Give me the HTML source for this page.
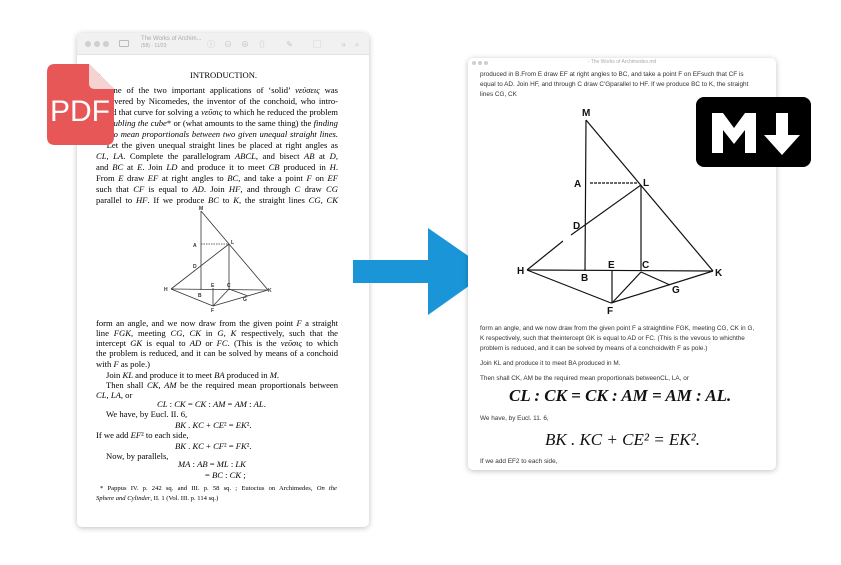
<!DOCTYPE html>
<html><head><meta charset="utf-8"><style>
*{margin:0;padding:0;box-sizing:border-box}
body{width:841px;height:565px;background:#fff;position:relative;overflow:hidden;font-family:"Liberation Serif",serif}
.win{position:absolute;background:#fff;border-radius:5px;box-shadow:0 1px 6px rgba(0,0,0,.25);overflow:hidden}
.l{position:absolute;white-space:nowrap;color:#000}
.lp .l{font-size:8.6px;left:96px;width:242px;text-align:justify;text-align-last:justify;line-height:11px}
.rp .l{font-family:"Liberation Sans",sans-serif;font-size:6.4px;color:#333;left:480px;line-height:10px}
.dot{position:absolute;width:6px;height:6px;border-radius:50%;background:#cfcfcf}
i{font-style:italic}
</style></head><body>
<div class="win" style="left:77px;top:33px;width:292px;height:494px">
 <div style="position:absolute;left:0;top:0;width:100%;height:22px;background:#f1f1f1;border-bottom:1px solid #e2e2e2"></div>
 <div class="dot" style="left:8px;top:8px"></div><div class="dot" style="left:17px;top:8px"></div><div class="dot" style="left:26px;top:8px"></div>
 <div style="position:absolute;left:42px;top:7px;width:10px;height:7px;border:1px solid #bbb;border-radius:1px"></div>
 <div style="position:absolute;left:64px;top:3px;font:6px 'Liberation Sans',sans-serif;color:#aaa;line-height:7px">The Works of Archim...<br><span style="font-size:5px">(58) · 11/23</span></div>
 <div style="position:absolute;left:130px;top:6px;font:8px 'Liberation Sans',sans-serif;color:#c4c4c4;letter-spacing:9px">ⓘ⊖⊕⇧ ✎ ▢ »⌕</div>
</div>
<div class="lp">
<div class="l" style="top:70px;left:96px;width:10px;text-align:left">x</div>
<div class="l" style="top:70px;left:190px;width:90px;text-align:left;text-align-last:auto">INTRODUCTION.</div>
<div class="l" style="top:85px"><b>4.</b> One of the two important applications of ‘solid’ <i>νεύσεις</i> was</div>
<div class="l" style="top:96px">discovered by Nicomedes, the inventor of the conchoid, who intro-</div>
<div class="l" style="top:107px">duced that curve for solving a <i>νεῦσις</i> to which he reduced the problem</div>
<div class="l" style="top:118px"><i>of doubling the cube</i>* or (what amounts to the same thing) the <i>finding</i></div>
<div class="l" style="top:129px"><i>of two mean proportionals between two given unequal straight lines.</i></div>
<div class="l" style="top:140px">&nbsp;&nbsp;&nbsp;Let the given unequal straight lines be placed at right angles as</div>
<div class="l" style="top:151px"><i>CL</i>, <i>LA</i>. Complete the parallelogram <i>ABCL</i>, and bisect <i>AB</i> at <i>D</i>,</div>
<div class="l" style="top:162px">and <i>BC</i> at <i>E</i>. Join <i>LD</i> and produce it to meet <i>CB</i> produced in <i>H</i>.</div>
<div class="l" style="top:173px">From <i>E</i> draw <i>EF</i> at right angles to <i>BC</i>, and take a point <i>F</i> on <i>EF</i></div>
<div class="l" style="top:184px">such that <i>CF</i> is equal to <i>AD</i>. Join <i>HF</i>, and through <i>C</i> draw <i>CG</i></div>
<div class="l" style="top:195px">parallel to <i>HF</i>. If we produce <i>BC</i> to <i>K</i>, the straight lines <i>CG</i>, <i>CK</i></div>
<div class="l" style="top:318px">form an angle, and we now draw from the given point <i>F</i> a straight</div>
<div class="l" style="top:328px">line <i>FGK</i>, meeting <i>CG</i>, <i>CK</i> in <i>G</i>, <i>K</i> respectively, such that the</div>
<div class="l" style="top:338px">intercept <i>GK</i> is equal to <i>AD</i> or <i>FC</i>. (This is the <i>νεῦσις</i> to which</div>
<div class="l" style="top:348px">the problem is reduced, and it can be solved by means of a conchoid</div>
<div class="l" style="top:359px;width:auto;text-align-last:auto">with <i>F</i> as pole.)</div>
<div class="l" style="top:370px;left:106px;width:auto;text-align-last:auto">Join <i>KL</i> and produce it to meet <i>BA</i> produced in <i>M</i>.</div>
<div class="l" style="top:380px;left:106px;width:232px">Then shall <i>CK</i>, <i>AM</i> be the required mean proportionals between</div>
<div class="l" style="top:390px;width:auto;text-align-last:auto"><i>CL</i>, <i>LA</i>, or</div>
<div class="l" style="top:399px;left:157px;width:auto;text-align-last:auto"><i>CL</i> : <i>CK</i> = <i>CK</i> : <i>AM</i> = <i>AM</i> : <i>AL</i>.</div>
<div class="l" style="top:409px;left:106px;width:auto;text-align-last:auto">We have, by Eucl. II. 6,</div>
<div class="l" style="top:420px;left:175px;width:auto;text-align-last:auto"><i>BK</i> . <i>KC</i> + <i>CE</i>² = <i>EK</i>².</div>
<div class="l" style="top:430px;width:auto;text-align-last:auto">If we add <i>EF</i>² to each side,</div>
<div class="l" style="top:441px;left:175px;width:auto;text-align-last:auto"><i>BK</i> . <i>KC</i> + <i>CF</i>² = <i>FK</i>².</div>
<div class="l" style="top:451px;left:106px;width:auto;text-align-last:auto">Now, by parallels,</div>
<div class="l" style="top:459px;left:178px;width:auto;text-align-last:auto"><i>MA</i> : <i>AB</i> = <i>ML</i> : <i>LK</i></div>
<div class="l" style="top:470px;left:205px;width:auto;text-align-last:auto">= <i>BC</i> : <i>CK</i> ;</div>
<div class="l" style="top:483px;font-size:6.6px;left:100px;width:237px">* Pappus IV. p. 242 sq. and III. p. 58 sq. ; Eutocius on Archimedes, <i>On the</i></div>
<div class="l" style="top:493px;font-size:6.6px;width:auto;text-align-last:auto"><i>Sphere and Cylinder</i>, II. 1 (Vol. III. p. 114 sq.)</div>
</div>
<svg style="position:absolute;left:0;top:0" width="841" height="565">
 <g stroke="#333" stroke-width="0.8" fill="none">
  <line x1="201" y1="211" x2="201" y2="290"/><line x1="201" y1="211" x2="268" y2="290"/>
  <line x1="201" y1="244" x2="229" y2="244" stroke-dasharray="1.5 1"/><line x1="229" y1="244" x2="229" y2="289"/>
  <line x1="171" y1="289" x2="229" y2="244"/><line x1="171" y1="289" x2="268" y2="290"/>
  <line x1="171" y1="289" x2="213" y2="306"/><line x1="213" y1="306" x2="268" y2="290"/>
  <line x1="213" y1="288" x2="213" y2="306"/><line x1="213" y1="306" x2="229" y2="289"/><line x1="229" y1="289" x2="248" y2="296"/>
 </g>
 <g font-family="Liberation Sans,sans-serif" font-size="5" font-weight="bold" fill="#333">
  <text x="199" y="210">M</text><text x="193" y="247">A</text><text x="231" y="244">L</text><text x="193" y="268">D</text>
  <text x="164" y="291">H</text><text x="198" y="297">B</text><text x="211" y="287">E</text><text x="227" y="287">C</text>
  <text x="268" y="292">K</text><text x="243" y="301">G</text><text x="211" y="312">F</text>
 </g>
</svg>
<svg style="position:absolute;left:47px;top:64px" width="67" height="81" viewBox="0 0 67 81">
 <path d="M8 0H42L67 25V73Q67 81 59 81H8Q0 81 0 73V8Q0 0 8 0Z" fill="#e85757"/>
 <path d="M42 0L67 25H48Q42 25 42 19Z" fill="#f6d3d3"/>
 <text x="33" y="57" text-anchor="middle" font-family="Liberation Sans,sans-serif" font-size="30" fill="#fff">PDF</text>
</svg>
<svg style="position:absolute;left:350px;top:225px" width="145" height="95">
 <rect x="3" y="35" width="80" height="23" fill="#1a96d8"/>
 <path d="M78 3L140 46L78 90Z" fill="#1a96d8"/>
</svg>
<div class="win" style="left:468px;top:58px;width:308px;height:412px">
 <div class="dot" style="left:4px;top:3px;width:4px;height:4px"></div><div class="dot" style="left:10px;top:3px;width:4px;height:4px"></div><div class="dot" style="left:16px;top:3px;width:4px;height:4px"></div>
 <div style="position:absolute;left:0;top:1px;width:100%;text-align:center;font:5px 'Liberation Sans',sans-serif;color:#aaa">▫ The Works of Archimedes.md</div>
</div>
<div class="rp">
<div class="l" style="top:70px">produced in B.From E draw EF at right angles to BC, and take a point F on EFsuch that CF is</div>
<div class="l" style="top:80px">equal to AD. Join HF, and through C draw C'Gparallel to HF. If we produce BC to K, the straight</div>
<div class="l" style="top:90px">lines CG, CK</div>
<div class="l" style="top:324px">form an angle, and we now draw from the given point F a straightline FGK, meeting CG, CK in G,</div>
<div class="l" style="top:334px">K respectively, such that theintercept GK is equal to AD or FC. (This is the vevous to whichthe</div>
<div class="l" style="top:344px">problem is reduced, and it can be solved by means of a conchoidwith F as pole.)</div>
<div class="l" style="top:359px">Join KL and produce it to meet BA produced in M.</div>
<div class="l" style="top:374px">Then shall CK, AM be the required mean proportionals betweenCL, LA, or</div>
<div class="l" style="top:414px">We have, by Eucl. 11. 6,</div>
<div class="l" style="top:457px">If we add EF2 to each side,</div>
</div>
<div style="position:absolute;left:509px;top:386px;font:italic bold 17px 'Liberation Serif',serif;color:#111;white-space:nowrap">CL : CK = CK : AM = AM : AL.</div>
<div style="position:absolute;left:545px;top:430px;font:italic 17px 'Liberation Serif',serif;color:#111;white-space:nowrap">BK . KC + CE² = EK².</div>
<svg style="position:absolute;left:0;top:0" width="841" height="565">
 <g stroke="#111" stroke-width="1.2" fill="none">
  <line x1="586" y1="120" x2="585" y2="271"/><line x1="586" y1="120" x2="713" y2="271"/>
  <line x1="590" y1="183" x2="637" y2="183" stroke-dasharray="3 1"/><line x1="641" y1="185" x2="641" y2="271"/>
  <line x1="527" y1="270" x2="563" y2="241"/><line x1="571" y1="235" x2="641" y2="185"/>
  <line x1="527" y1="270" x2="713" y2="271"/>
  <line x1="527" y1="270" x2="611" y2="303"/><line x1="611" y1="303" x2="713" y2="271"/>
  <line x1="612" y1="271" x2="612" y2="303"/><line x1="612" y1="303" x2="641" y2="272"/><line x1="641" y1="272" x2="670" y2="285"/>
 </g>
 <g font-family="Liberation Sans,sans-serif" font-size="10" font-weight="bold" fill="#111">
  <text x="582" y="116">M</text><text x="574" y="187">A</text><text x="643" y="186">L</text><text x="573" y="229">D</text>
  <text x="517" y="274">H</text><text x="581" y="281">B</text><text x="608" y="268">E</text><text x="642" y="268">C</text>
  <text x="715" y="276">K</text><text x="672" y="293">G</text><text x="607" y="314">F</text>
 </g>
</svg>
<svg style="position:absolute;left:696px;top:97px" width="115" height="70" viewBox="0 0 115 70">
 <rect width="115" height="70" rx="8" fill="#000"/>
 <path d="M16 56V16H27L38 31L49 16H60V56H49V33L38 47L27 33V56Z" fill="#fff"/>
 <path d="M80 16H92V38H104L86 58L68 38H80Z" fill="#fff"/>
</svg>
</body></html>
